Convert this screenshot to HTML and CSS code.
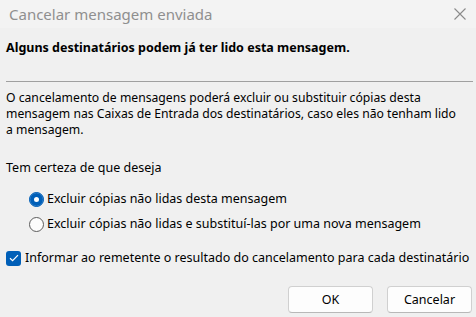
FILE: index.html
```html
<!DOCTYPE html>
<html lang="pt-BR">
<head>
<meta charset="utf-8">
<link rel="stylesheet" href="styles.css">
</head>
<body>
<div class="dialog">
  <div class="titlebar">
    <span class="title">Cancelar mensagem enviada</span>
    <svg class="close" width="12" height="12" viewBox="0 0 12 12"><path d="M0.5 0.5 L11.5 11.5 M11.5 0.5 L0.5 11.5" stroke="#8a8a8a" stroke-width="1.1" fill="none"/></svg>
  </div>
  <div class="content">
    <p class="heading">Alguns destinatários podem já ter lido esta mensagem.</p>
    <div class="separator"></div>
    <p class="para">O cancelamento de mensagens poderá excluir ou substituir cópias desta<br>mensagem nas Caixas de Entrada dos destinatários, caso eles não tenham lido<br>a mensagem.</p>
    <p class="question">Tem certeza de que deseja</p>
    <div class="options">
      <label class="option"><span class="radio checked"></span><span>Excluir cópias não lidas desta mensagem</span></label>
      <label class="option"><span class="radio"></span><span>Excluir cópias não lidas e substituí-las por uma nova mensagem</span></label>
    </div>
    <label class="check-row"><span class="checkbox"><svg width="10" height="8" viewBox="0 0 10 8"><path d="M1 4.2 L3.6 6.6 L9 1.2" stroke="#fff" stroke-width="1.2" fill="none"/></svg></span><span>Informar ao remetente o resultado do cancelamento para cada destinatário</span></label>
    <div class="buttons">
      <button class="btn">OK</button>
      <button class="btn">Cancelar</button>
    </div>
  </div>
</div>
</body>
</html>
```
FILE: styles.css
```css
html, body {
  margin: 0;
  padding: 0;
  background: #f0f0f0;
}
.dialog {
  width: 476px;
  height: 317px;
  font-family: "Noto Sans", "DejaVu Sans", sans-serif;
  font-size: 12.5px;
  color: #000;
  overflow: hidden;
}
.titlebar {
  height: 28px;
  background: #f3f3f3;
  display: flex;
  align-items: center;
  justify-content: space-between;
  padding: 0 10px 0 9px;
}
.title {
  font-size: 15px;
  color: #8f8f8f;
  line-height: 20px;
}
.close {
  display: block;
}
.content {
  padding: 0 4px 0 6px;
}
.heading {
  margin: 12px 0 0 0;
  font-weight: bold;
  line-height: 16px;
  white-space: nowrap;
}
.separator {
  height: 1px;
  background: #a0a0a0;
  margin: 25px -1px 0 0;
}
.para {
  margin: 8px 0 0 0;
  line-height: 16px;
  font-size: 12.2px;
  white-space: nowrap;
}
.question {
  margin: 22px 0 0 0;
  line-height: 16px;
}
.options {
  display: flex;
  flex-direction: column;
  gap: 9px;
  padding-left: 23px;
  margin-top: 15px;
}
.option, .check-row {
  display: flex;
  align-items: center;
  gap: 3px;
  line-height: 16px;
  white-space: nowrap;
}
.radio {
  width: 13px;
  height: 13px;
  border-radius: 50%;
  border: 1px solid #5c5c5c;
  background: #fdfdfd;
  box-sizing: content-box;
  flex: none;
}
.radio.checked {
  border-color: #005fb8;
  background: #005fb8;
  box-shadow: inset 0 0 0 4px #005fb8, inset 0 0 0 7px #fff;
}
.check-row {
  margin-top: 18px;
  gap: 4px;
}
.checkbox {
  width: 15px;
  height: 15px;
  border-radius: 3px;
  background: #005fb8;
  display: flex;
  align-items: center;
  justify-content: center;
  flex: none;
}
.checkbox svg {
  display: block;
}
.buttons {
  display: flex;
  justify-content: flex-end;
  gap: 14px;
  margin-top: 20px;
}
.btn {
  width: 85px;
  height: 27px;
  background: #fdfdfd;
  border: 1px solid #d0d0d0;
  border-bottom-color: #b8b8b8;
  border-radius: 4px;
  font-family: inherit;
  font-size: 12.5px;
  color: #000;
  padding: 0;
}
```
